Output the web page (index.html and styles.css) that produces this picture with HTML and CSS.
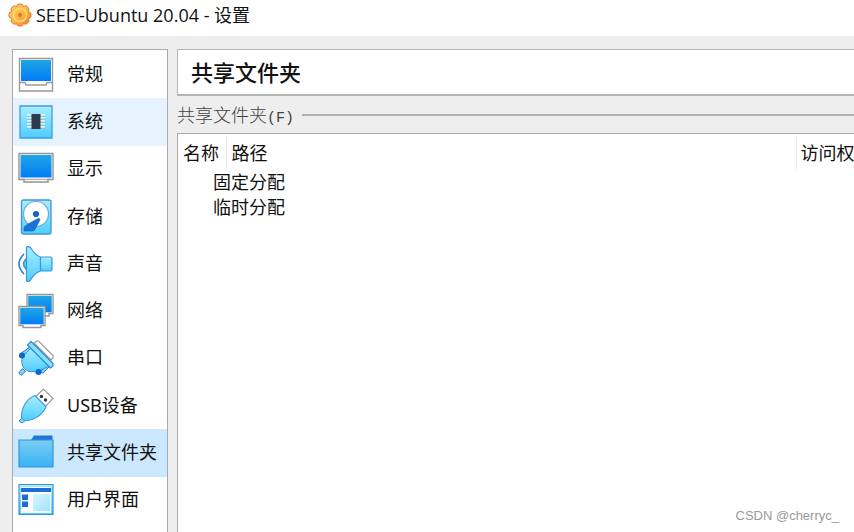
FILE: index.html
```html
<!DOCTYPE html>
<html lang="zh-CN">
<head>
<meta charset="utf-8">
<title>SEED-Ubuntu 20.04 - 设置</title>
<link rel="stylesheet" href="styles.css">
</head>
<body>
<svg class="defs" width="0" height="0" aria-hidden="true">
  <defs>
    <linearGradient id="screen" x1="0" y1="0" x2="0" y2="1"><stop offset="0" stop-color="#1fa5e2"/><stop offset="1" stop-color="#007df8"/></linearGradient>
    <linearGradient id="aqua" x1="0" y1="0" x2="0" y2="1"><stop offset="0" stop-color="#a6efff"/><stop offset="1" stop-color="#4fcdfd"/></linearGradient>
    <linearGradient id="folder" x1="0" y1="0" x2="0" y2="1"><stop offset="0" stop-color="#7cccf3"/><stop offset="1" stop-color="#37b4f4"/></linearGradient>
    <linearGradient id="pane" x1="0" y1="0" x2="1" y2="1"><stop offset="0" stop-color="#d8f8fa"/><stop offset="1" stop-color="#9fe3fb"/></linearGradient>
    <linearGradient id="gear" x1="0" y1="0" x2="1" y2="1"><stop offset="0" stop-color="#ffc75e"/><stop offset=".5" stop-color="#ffb93f"/><stop offset="1" stop-color="#ee7a1c"/></linearGradient>
  </defs>
</svg>
<header class="titlebar">
  <svg class="gear" viewBox="0 0 24 24" aria-hidden="true">
    <path d="M9.500 1.500Q12 .5 14.500 1.500L15.500 3.500 18 2.700Q20.500 4 21 6.200L20.500 8.500 22.700 9.800Q23.500 12 22.700 14.500L20.500 15.800 21 18.200Q19.800 20.600 17.500 21.300L15.500 20.600 14.300 22.700Q12 23.500 9.500 22.700L8.500 20.600 6.200 21.300Q3.800 20.200 3 17.800L3.600 15.600 1.400 14.300Q.5 12 1.400 9.600L3.600 8.400 3 6Q4 3.500 6.300 2.800L8.500 3.500z" fill="url(#gear)" stroke="#d97b3f" stroke-width="1" stroke-linejoin="round"/>
    <circle cx="12" cy="12" r="6.500" fill="none" stroke="#ffdb85" stroke-width="1.600"/>
    <circle cx="12" cy="12" r="2" fill="#d0783a"/>
  </svg>
  <h1 class="window-title">SEED-Ubuntu 20.04 - 设置</h1>
</header>
<div class="content">
  <nav class="sidebar" aria-label="设置">
    <button class="item" type="button">
      <svg class="icon" viewBox="0 0 36 36" aria-hidden="true"><path d="M1.500 1.500h33v32.500h-33z" fill="#fff" stroke="#999" stroke-width="1.400"/><path d="M3 3h30v21H3z" fill="url(#screen)"/><path d="M2 25.500h5l1 2.500h20l1-2.500h5" fill="none" stroke="#999" stroke-width="1.300"/></svg>
      <span class="label">常规</span>
    </button>
    <button class="item hovered" type="button">
      <svg class="icon" viewBox="0 0 36 36" aria-hidden="true"><path d="M2 2h32v32H2z" fill="url(#aqua)" stroke="#3f9be9" stroke-width="1.300"/><path d="M9 11h18M9 14h18M9 17h18M9 20h18M9 23h18" stroke="#dff4fa" stroke-width="2.200"/><path d="M9 12.200h18M9 15.200h18M9 18.200h18M9 21.200h18M9 24.200h18" stroke="#7badc2" stroke-width=".7"/><path d="M13.500 10h9v15h-9z" fill="#30394a"/></svg>
      <span class="label">系统</span>
    </button>
    <button class="item" type="button">
      <svg class="icon" viewBox="0 0 36 36" aria-hidden="true"><path d="M1 2.500h34v26h-5V31H6v-2.500H1z" fill="#fff" stroke="#929292" stroke-width="1.400"/><path d="M2.500 4h31v22.500h-31z" fill="url(#screen)"/><path d="M1 28.300h34" stroke="#999"/></svg>
      <span class="label">显示</span>
    </button>
    <button class="item" type="button">
      <svg class="icon" viewBox="0 0 36 36" aria-hidden="true"><rect x="3.500" y="1" width="29.500" height="34" rx="2" fill="url(#aqua)" stroke="#4295dc" stroke-width="1.300"/><circle cx="18" cy="15" r="12.500" fill="#fff" stroke="#76a9d9" stroke-width="1.200"/><circle cx="18" cy="15" r="3.100" fill="#1763c9"/><path d="M20 19.500q2.200-.5 2 1.500L17.500 29.500q-1 2.500-3 2.500H6v-4l4-3z" fill="#1c72d6" stroke="#1260be" stroke-width=".6"/></svg>
      <span class="label">存储</span>
    </button>
    <button class="item" type="button">
      <svg class="icon" viewBox="0 0 36 36" aria-hidden="true"><path d="M6 8q-10 10 0 20" fill="none" stroke="#277bd1" stroke-width="1.500"/><path d="M8.500 12.500q-6 5.500 0 11z" fill="#62d1fb" stroke="#277bd1" stroke-width="1.200"/><path d="M8.500 1q3-1.500 5 2Q17 9 22.500 11V25Q17 27 13.500 32.500q-2 4-5 2.500z" fill="url(#aqua)" stroke="#3d94db" stroke-width="1.200"/><rect x="22.500" y="11" width="11.500" height="14" rx="1.500" fill="url(#aqua)" stroke="#3d94db" stroke-width="1.200"/></svg>
      <span class="label">声音</span>
    </button>
    <button class="item" type="button">
      <svg class="icon" viewBox="0 0 36 36" aria-hidden="true"><path d="M9 1.500h26v19h-4V23H13v-2.500H9z" fill="#fff" stroke="#999" stroke-width="1.400"/><path d="M10.200 2.800h23.500v16.500H10.200z" fill="url(#screen)"/><path d="M1 13.500h26v19h-4V34.500H5v-2H1z" fill="#fff" stroke="#999" stroke-width="1.400"/><path d="M2.200 14.800h23.500v16.500H2.200z" fill="url(#screen)"/></svg>
      <span class="label">网络</span>
    </button>
    <button class="item" type="button">
      <svg class="icon" viewBox="0 0 36 36" aria-hidden="true"><path d="M16 3l2.500-2h2l14.500 14.500v2l-2 2.500z" fill="#fff" stroke="#999" stroke-width="1.200"/><path d="M4.500 28.500l3 3L3 35.300.8 33z" fill="#75dcff" stroke="#2875ce"/><path d="M3.500 13l8-6 3 4-9 7z" fill="#76ddfc" stroke="#2875ce"/><path d="M22 32l7-8 4 1-8 8z" fill="#76ddfc" stroke="#2875ce"/><path d="M13 8l18 18-8 4Q18 33 11 31.500 5 29 4 24q-1-4 1-8z" fill="url(#aqua)" stroke="#3489d9"/><path d="M9.500 5L13 1.500 35 23.500V26l-2.500 2z" fill="#87e3ff" stroke="#3489d9" stroke-width="1.200" stroke-linejoin="round"/><circle cx="4" cy="15.500" r="3" fill="#0965cf"/><circle cx="20.500" cy="32" r="3" fill="#0965cf"/></svg>
      <span class="label">串口</span>
    </button>
    <button class="item" type="button">
      <svg class="icon" viewBox="0 0 36 36" aria-hidden="true"><path d="M17 9l8.500-8L35 10.500 27 19z" fill="#fff" stroke="#999" stroke-width="1.200"/><circle cx="23.500" cy="8.500" r="1.700" fill="#333"/><circle cx="27.500" cy="12" r="1.700" fill="#333"/><path d="M5 29l3 3L4 35 1 33z" fill="#75dcff" stroke="#3489d9"/><path d="M15.500 8q1-.7 2 .2L27.500 18q1 1 0 2.500Q21 31 9.500 32.500 6 33 4 30.500 3 29 3.500 26 5 14 15.500 8z" fill="url(#aqua)" stroke="#4a9bd7" stroke-width="1.200"/></svg>
      <span class="label">USB设备</span>
    </button>
    <button class="item selected" type="button" aria-current="page">
      <svg class="icon" viewBox="0 0 36 36" aria-hidden="true"><path d="M13 5l3-4.500h18.500V7H13z" fill="#1e76d8"/><path d="M1 5h34v27H1z" fill="url(#folder)" stroke="#3593dc" stroke-width="1.200"/></svg>
      <span class="label">共享文件夹</span>
    </button>
    <button class="item" type="button">
      <svg class="icon" viewBox="0 0 36 36" aria-hidden="true"><path d="M1 2.500h34v30H1z" fill="url(#aqua)" stroke="#3c94df" stroke-width="1.200"/><path d="M3 5h30v26H3z" fill="#fff"/><path d="M3 6h30v4H3zM4 12.500h6V18H4zM4 19.500h6V25H4z" fill="#1b6fd3"/><path d="M15 12h17v17H15z" fill="url(#pane)"/></svg>
      <span class="label">用户界面</span>
    </button>
  </nav>
  <main class="page">
    <h2 class="page-title">共享文件夹</h2>
    <section class="group" aria-labelledby="group-label">
      <div class="group-head"><h3 class="group-label" id="group-label">共享文件夹<span class="key">(F)</span></h3></div>
      <div class="list">
        <table class="folders">
          <colgroup><col class="col-name"><col><col class="col-access"></colgroup>
          <thead><tr><th scope="col">名称</th><th scope="col">路径</th><th scope="col">访问权</th></tr></thead>
          <tbody>
            <tr><td colspan="3">固定分配</td></tr>
            <tr><td colspan="3">临时分配</td></tr>
          </tbody>
        </table>
      </div>
    </section>
  </main>
</div>
<div class="watermark">CSDN @cherryc_</div>
</body>
</html>
```
FILE: styles.css
```css
* { box-sizing: border-box; }

body {
  margin: 0;
  height: 100vh;
  display: flex;
  flex-direction: column;
  overflow: hidden;
  background: #eee;
  color: #111;
  font: 18px/24px "Noto Sans", "Noto Sans CJK SC", sans-serif;
}

h1, h2, h3 { margin: 0; font-weight: 400; }

.defs { position: absolute; }

.titlebar {
  display: flex;
  align-items: center;
  gap: 4px;
  height: 36px;
  padding: 0 8px 6px;
  background: #fff;
}

.gear { width: 24px; height: 24px; }

.window-title { font: 18px/24px "Open Sans", "Noto Sans CJK SC", sans-serif; }

.content {
  flex: 1;
  min-height: 0;
  display: flex;
  gap: 9px;
  padding: 13px 0 0 12px;
}

.sidebar {
  flex: none;
  width: 156px;
  display: flex;
  flex-direction: column;
  padding: 1px 0 8px;
  background: #fff;
  border: 1px solid #a9a9b0;
  border-bottom: 0;
}

.item {
  flex: 1;
  display: flex;
  align-items: center;
  gap: 13px;
  padding: 0 0 0 5px;
  border: 0;
  background: none;
  color: inherit;
  font: inherit;
  white-space: nowrap;
}

.hovered { background: #e5f3ff; }
.selected { background: #cce8ff; }

.icon { flex: none; width: 36px; height: 36px; }
.label { padding-bottom: 2px; }

.page {
  flex: 1;
  min-width: 0;
  display: flex;
  flex-direction: column;
}

.page-title {
  padding: 7px 13px;
  background: #fff;
  border: 1px solid #b4b4b4;
  border-width: 1px 0 2px 1px;
  font-size: 22px;
  line-height: 30px;
  font-weight: 500;
}

.group {
  flex: 1;
  min-height: 0;
  display: flex;
  flex-direction: column;
}

.group-head {
  display: flex;
  align-items: center;
  gap: 8px;
  height: 37px;
}

.group-head::after {
  content: "";
  flex: 1;
  border-top: 2px solid #b0b0b0;
}

.group-label { color: #444; font-size: 18px; font-weight: 300; }
.key { font: 15px "Liberation Mono", monospace; }

.list {
  flex: 1;
  padding-top: 2px;
  background: #fff;
  border: 1px solid #a9a9b0;
  border-width: 1px 0 0 1px;
}

.folders {
  width: 100%;
  table-layout: fixed;
  border-collapse: collapse;
}

.col-name { width: 48px; }
.col-access { width: 58px; }

th {
  height: 33px;
  padding: 0 0 0 5px;
  border-right: 1px solid #e5e5e5;
  font-weight: 400;
  text-align: left;
  white-space: nowrap;
}

th:last-child { padding-left: 4px; border-right: 0; }

td { height: 25px; padding: 0 0 0 35px; }

.watermark {
  position: absolute;
  right: 15px;
  bottom: 8px;
  color: #999;
  font: 13px/16px "Liberation Sans", sans-serif;
}
```
